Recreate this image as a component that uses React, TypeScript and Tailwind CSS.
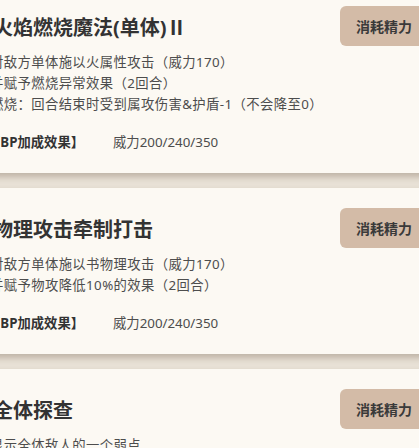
import React from "react";

type Skill = {
  title: string;
  lines: string[];
  bp: string;
};

const skills: Skill[] = [
  {
    title: "火焰燃烧魔法(单体)Ⅱ",
    lines: [
      "对敌方单体施以火属性攻击（威力170）",
      "并赋予燃烧异常效果（2回合）",
      "燃烧：回合结束时受到属攻伤害&护盾-1（不会降至0）",
    ],
    bp: "威力200/240/350",
  },
  {
    title: "物理攻击牵制打击",
    lines: [
      "对敌方单体施以书物理攻击（威力170）",
      "并赋予物攻降低10%的效果（2回合）",
    ],
    bp: "威力200/240/350",
  },
  {
    title: "全体探查",
    lines: ["显示全体敌人的一个弱点"],
    bp: "",
  },
];

function Card({ s }: { s: Skill }) {
  return (
    <div className="ml-[-30px] w-[478px] shrink-0 bg-[#fcf9f3] pl-[20px] pr-[20px] pt-[20px] pb-[20px] shadow-[0_4px_6px_rgba(90,70,45,0.28)]">
      <div className="flex items-center justify-between">
        <div className="ml-[3px] pt-[3px] text-[20px] font-bold leading-[28px] text-[#333333]">
          {s.title}
        </div>
        <div className="flex h-[40px] w-[88px] items-center justify-center rounded-[6px] bg-[#d3bba7] text-[14px] font-bold text-[#3a3a3a]">
          消耗精力
        </div>
      </div>
      <div className="mt-[6px] text-[13.33px] leading-[21px] tracking-[0.4px] text-[#4d4d4d] [text-spacing-trim:space-all]">
        {s.lines.map((l, i) => (
          <div key={i} className="whitespace-nowrap">
            {l}
          </div>
        ))}
      </div>
      {s.bp && (
        <div className="ml-[-3px] mt-[17px] flex whitespace-nowrap text-[13.33px] leading-[21px] [text-spacing-trim:space-all]">
          <span className="w-[126px] shrink-0 font-bold text-[#333333]">
            【BP加成效果】
          </span>
          <span className="text-[#4d4d4d]">{s.bp}</span>
        </div>
      )}
    </div>
  );
}

export default function App() {
  return (
    <div
      className="h-[448px] w-[419px] overflow-hidden bg-[#e8e1d6]"
      style={{
        fontFamily: '"Noto Sans", "Noto Sans CJK SC", sans-serif',
      }}
    >
      <div className="mt-[-14px] flex flex-col gap-[15px]">
        {skills.map((s, i) => (
          <Card key={i} s={s} />
        ))}
      </div>
    </div>
  );
}
